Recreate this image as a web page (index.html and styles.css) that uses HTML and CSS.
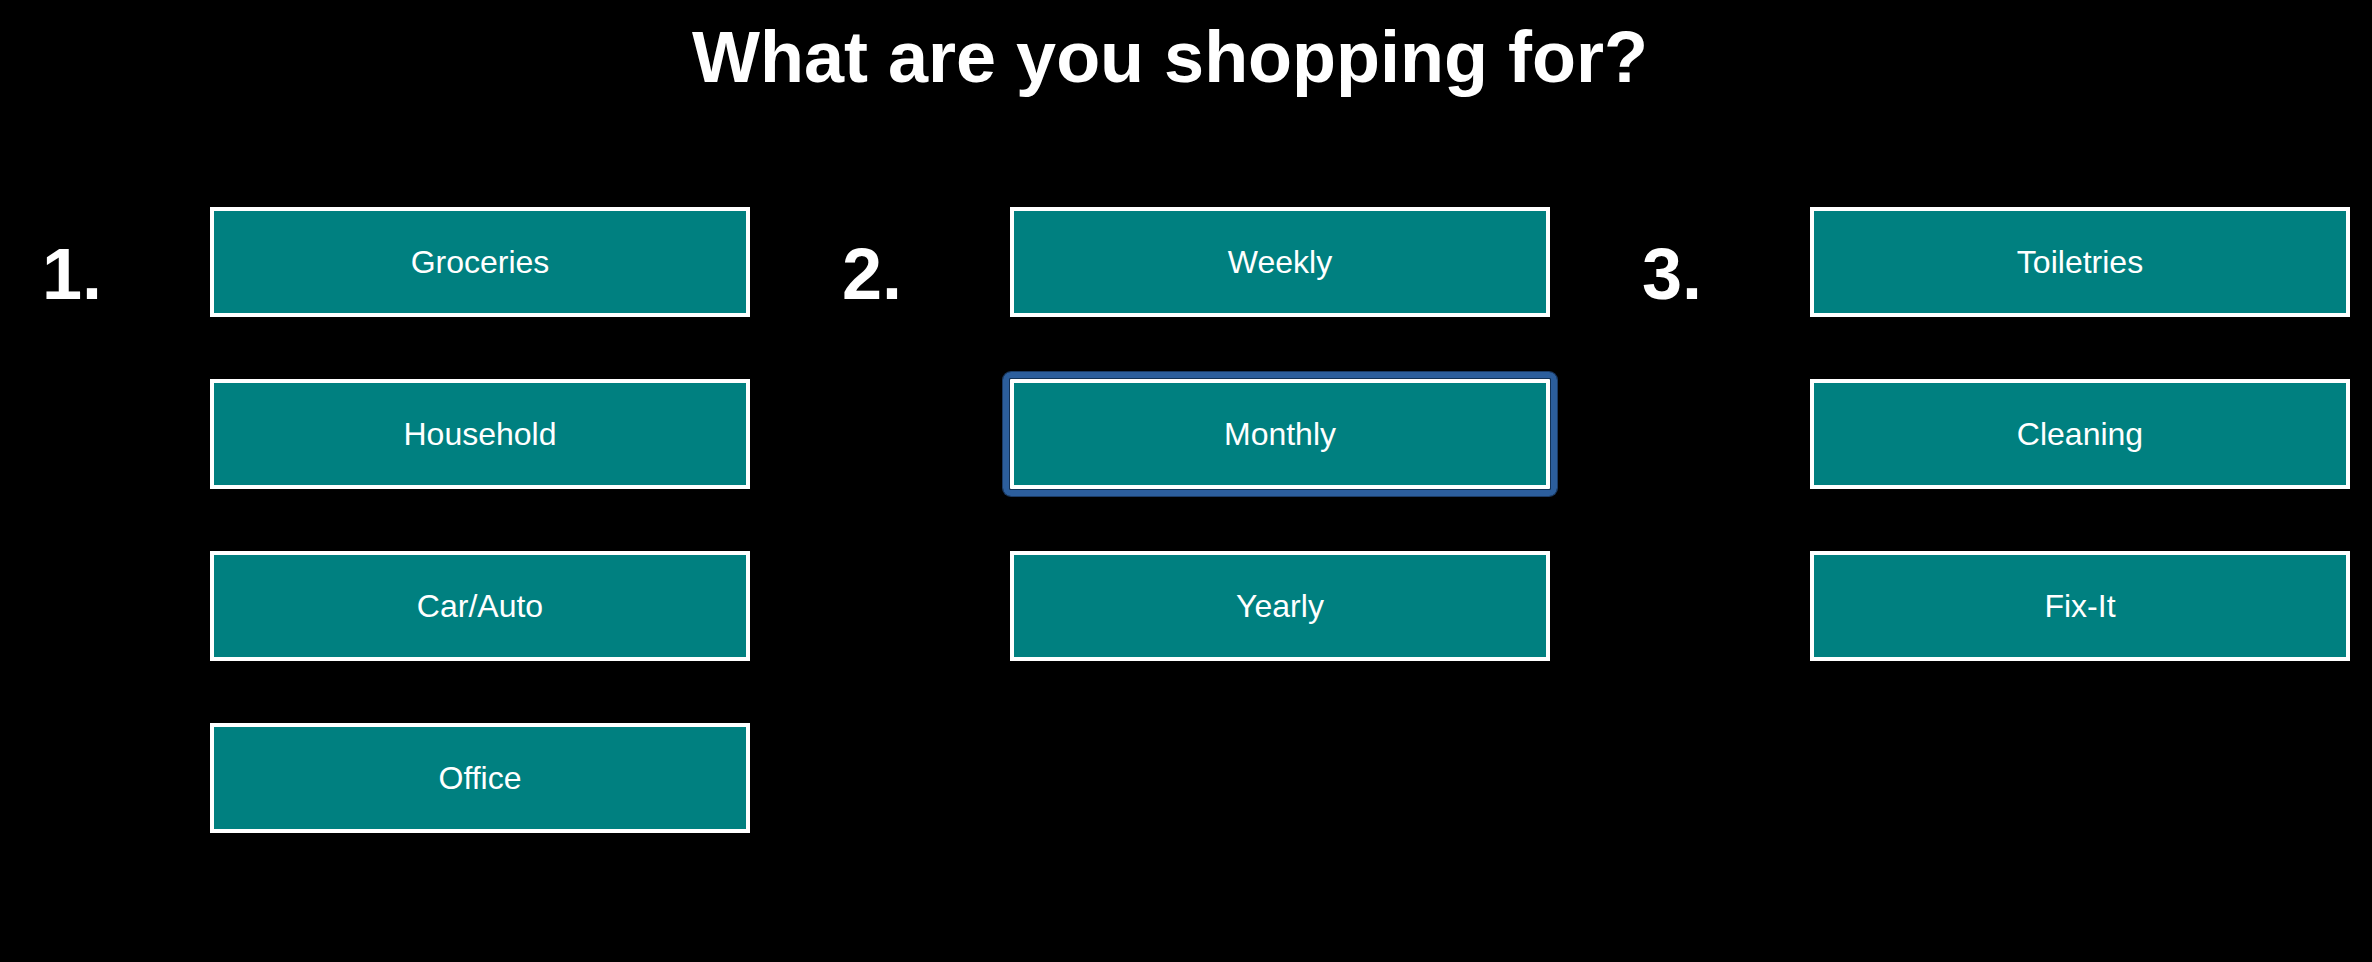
FILE: index.html
```html
<!DOCTYPE html>
<html lang="en">
<head>
<meta charset="utf-8">
<title>What are you shopping for?</title>
<link rel="stylesheet" href="styles.css">
</head>
<body>
<h1 class="title">What are you shopping for?</h1>
<div class="groups">
  <div class="group">
    <div class="num">1.</div>
    <div class="list">
      <button class="btn">Groceries</button>
      <button class="btn">Household</button>
      <button class="btn">Car/Auto</button>
      <button class="btn">Office</button>
    </div>
  </div>
  <div class="group">
    <div class="num">2.</div>
    <div class="list">
      <button class="btn">Weekly</button>
      <button class="btn btn-focus">Monthly</button>
      <button class="btn">Yearly</button>
    </div>
  </div>
  <div class="group">
    <div class="num">3.</div>
    <div class="list">
      <button class="btn">Toiletries</button>
      <button class="btn">Cleaning</button>
      <button class="btn">Fix-It</button>
    </div>
  </div>
</div>
</body>
</html>
```
FILE: styles.css
```css
html, body {
  margin: 0;
  padding: 0;
  background: #000;
  color: #fff;
  font-family: "Liberation Sans", Arial, sans-serif;
}
body {
  width: 2372px;
  height: 962px;
  overflow: hidden;
}
.title {
  margin: 16px 0 0;
  padding-right: 32px;
  font-size: 72px;
  font-weight: bold;
  line-height: normal;
  text-align: center;
}
.groups {
  display: flex;
  gap: 92px;
  padding-left: 42px;
  margin-top: 109px;
}
.group {
  display: flex;
  width: 708px;
}
.num {
  width: 168px;
  flex: none;
  font-size: 72px;
  font-weight: bold;
  line-height: 72px;
  padding-top: 31px;
}
.list {
  display: flex;
  flex-direction: column;
  gap: 62px;
}
.btn {
  position: relative;
  width: 540px;
  height: 110px;
  box-sizing: border-box;
  margin: 0;
  padding: 0;
  border: 4px solid #fff;
  background: #008080;
  color: #fff;
  font-family: "Liberation Sans", Arial, sans-serif;
  font-size: 32px;
  cursor: pointer;
}
.btn-focus::after {
  content: "";
  position: absolute;
  top: -11px;
  left: -11px;
  right: -11px;
  bottom: -11px;
  border: 6px solid #2c5e9c;
  border-radius: 8px;
  box-shadow: inset 0 0 0 1px #123257, 0 0 0 1px #1b3b66;
  pointer-events: none;
}
```
